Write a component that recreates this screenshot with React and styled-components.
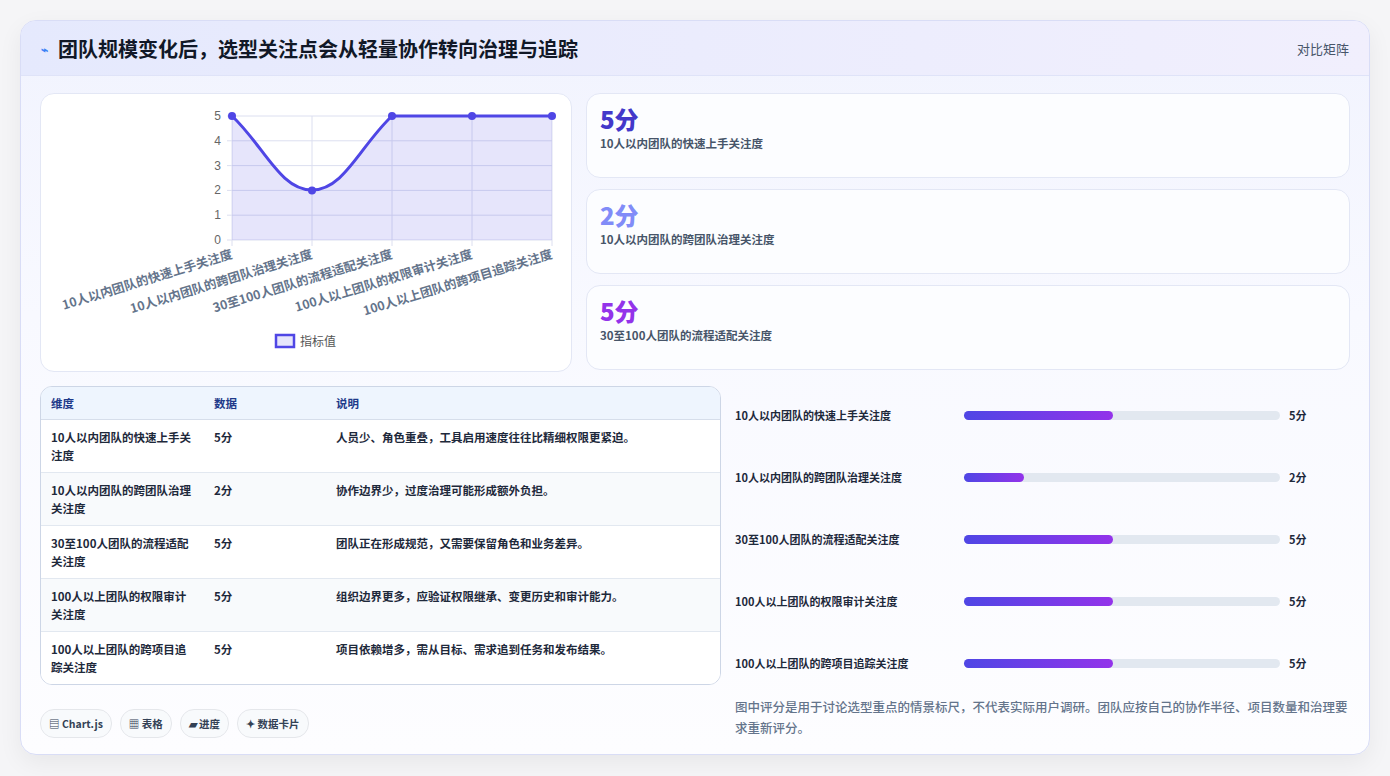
import React from "react";
import styled, { createGlobalStyle } from "styled-components";

const Global = createGlobalStyle`
  body { margin: 0; background: #f5f5f7; font-family: "Noto Sans CJK SC", "Noto Sans", sans-serif; color: #1e293b; }
`;
const Page = styled.div`padding: 20px 20px 21px 20px; width: 1390px; box-sizing: border-box;`;
const Card = styled.div`
  width: 1350px; height: 735px; box-sizing: border-box; border: 1px solid #d9ddf6; border-radius: 16px;
  background: linear-gradient(180deg, #f1f3fe 0%, #f8f9ff 40%, #fdfdff 100%); overflow: hidden;
  box-shadow: 0 8px 24px rgba(0,0,0,0.06); display: flex; flex-direction: column;
`;
const Header = styled.div`
  height: 55px; flex: none; display: flex; align-items: center; justify-content: space-between; padding: 0 20px 0 20px;
  background: linear-gradient(90deg, #e5e9fd, #f1effd); border-bottom: 1px solid #dfe3f8; box-sizing: border-box;
`;
const Title = styled.h1`margin: 0; font-size: 20px; font-weight: 700; color: #111827; display: flex; align-items: center; gap: 10px;`;
const Tag = styled.span`font-size: 13px; color: #475569;`;
const Body = styled.div`padding: 17px 19px 0 19px; display: flex; flex-direction: column; gap: 14px;`;
const Row = styled.div`display: grid; grid-template-columns: ${p => p.cols}; column-gap: 14px;`;
const Panel = styled.div`background: #fff; border: 1px solid #e3e7f5; border-radius: 14px;`;
const ChartPanel = styled(Panel)`height: 277px; position: relative;`;
const Stats = styled.div`display: flex; flex-direction: column; gap: 11px;`;
const Stat = styled(Panel)`height: 85px; box-sizing: border-box; padding: 9px 13px; background: #fcfdff;`;
const StatVal = styled.div`font-size: 24px; font-weight: 800; line-height: 32px; color: ${p => p.c};`;
const StatLbl = styled.div`font-size: 11.5px; font-weight: 700; color: #475569;`;
const Table = styled.table`
  width: 681px; border-collapse: separate; border-spacing: 0; border: 1px solid #cdd6e6; border-radius: 12px; overflow: hidden;
  font-size: 11.5px; background: #fff;
`;
const Th = styled.th`text-align: left; font-weight: 700; color: #1e3a8a; background: #eef5fe; height: 32px; padding: 0 10px; border-bottom: 1px solid #d6deeb; width: ${p => p.w || "auto"};`;
const Td = styled.td`padding: 8px 10px; vertical-align: top; line-height: 18px; height: 36px; color: #1e293b; font-weight: 600; background: ${p => p.alt ? "#f8fafc" : "#fff"}; border-top: ${p => p.first ? "none" : "1px solid #e2e8f0"};`;
const Right = styled.div`display: flex; flex-direction: column;`;
const Bars = styled.div`display: flex; flex-direction: column; padding-top: 21px; gap: 53px;`;
const BarRow = styled.div`display: grid; grid-template-columns: 220px 316px 1fr; align-items: center; column-gap: 9px; font-size: 11px; font-weight: 700; height: 9px;`;
const Track = styled.div`height: 9px; border-radius: 5px; background: #e2e8f0;`;
const Fill = styled.div`height: 100%; border-radius: 5px; background: linear-gradient(90deg, #4f46e5, #9333ea);`;
const Note = styled.p`margin: 32px 0 0; font-size: 12.5px; line-height: 21px; color: #64748b; font-weight: 500;`;
const Chips = styled.div`display: flex; gap: 8px; padding-top: 24px;`;
const Chip = styled.span`font-size: 10.5px; font-weight: 700; color: #334155; background: #f8fafc; border: 1px solid #e5e7eb; border-radius: 14px; padding: 6px 8px;`;

const labels = ["10人以内团队的快速上手关注度","10人以内团队的跨团队治理关注度","30至100人团队的流程适配关注度","100人以上团队的权限审计关注度","100人以上团队的跨项目追踪关注度"];
const vals = [5,2,5,5,5];
const notes = ["人员少、角色重叠，工具启用速度往往比精细权限更紧迫。","协作边界少，过度治理可能形成额外负担。","团队正在形成规范，又需要保留角色和业务差异。","组织边界更多，应验证权限继承、变更历史和审计能力。","项目依赖增多，需从目标、需求追到任务和发布结果。"];

function Chart() {
  const xs = [191, 271, 351, 431, 511];
  const y = v => 146 - v * 24.8;
  const area = "M191,22 C223,52 239,96 271,96 C303,96 319,52 351,22 L511,22";
  return (
    <svg width="531" height="277" style={{ position: "absolute", left: 0, top: 0 }}>
      {[0,1,2,3,4,5].map(v => <g key={v}><line x1="186" x2="511" y1={y(v)} y2={y(v)} stroke="#dcdff0" /><text x="180" y={y(v)+4} textAnchor="end" fontSize="12" fill="#666" fontFamily="Liberation Sans">{v}</text></g>)}
      {xs.map(x => <line key={x} x1={x} x2={x} y1="22" y2="152" stroke="#dcdff0" />)}
      <path d={area + " L511,146 L191,146 Z"} fill="rgba(79,70,229,0.14)" />
      <path d={area} fill="none" stroke="#4f46e5" strokeWidth="3" />
      {xs.map((x,i) => <circle key={x} cx={x} cy={y(vals[i])} r="4" fill="#4f46e5" />)}
      {labels.map((l,i) => <text key={i} transform={`translate(${xs[i]},160) rotate(-17)`} textAnchor="end" dy="4" fontSize="12.5" fontWeight="700" fill="#64748b" fontFamily="Noto Sans CJK SC">{l}</text>)}
      <rect x="235" y="241" width="18" height="12" fill="rgba(79,70,229,0.14)" stroke="#4f46e5" strokeWidth="2.5" />
      <text x="259" y="252" fontSize="12" fill="#555" fontFamily="Noto Sans CJK SC">指标值</text>
    </svg>
  );
}

export default function App() {
  return (
    <Page>
      <Global />
      <Card>
        <Header>
          <Title><span style={{ color: "#3b82f6", fontSize: 12 }}>⌁</span>团队规模变化后，选型关注点会从轻量协作转向治理与追踪</Title>
          <Tag>对比矩阵</Tag>
        </Header>
        <Body>
          <Row cols="532px 1fr">
            <ChartPanel><Chart /></ChartPanel>
            <Stats>
              <Stat><StatVal c="#4338ca">5分</StatVal><StatLbl>10人以内团队的快速上手关注度</StatLbl></Stat>
              <Stat><StatVal c="#818cf8">2分</StatVal><StatLbl>10人以内团队的跨团队治理关注度</StatLbl></Stat>
              <Stat><StatVal c="#9333ea">5分</StatVal><StatLbl>30至100人团队的流程适配关注度</StatLbl></Stat>
            </Stats>
          </Row>
          <Row cols="681px 1fr">
            <div>
              <Table>
                <thead><tr><Th w="143px">维度</Th><Th w="102px">数据</Th><Th>说明</Th></tr></thead>
                <tbody>
                  {labels.map((d,i) => (
                    <tr key={i}>
                      <Td first={i===0} alt={i%2===1}>{d}</Td>
                      <Td first={i===0} alt={i%2===1}>{vals[i]}分</Td>
                      <Td first={i===0} alt={i%2===1}>{notes[i]}</Td>
                    </tr>
                  ))}
                </tbody>
              </Table>
              <Chips>
                <Chip>▤ Chart.js</Chip><Chip>▦ 表格</Chip><Chip>▰ 进度</Chip><Chip>✦ 数据卡片</Chip>
              </Chips>
            </div>
            <Right>
              <Bars>
                {labels.map((d,i) => (
                  <BarRow key={i}><span>{d}</span><Track><Fill style={{ width: vals[i] === 5 ? "47%" : "19%" }} /></Track><span>{vals[i]}分</span></BarRow>
                ))}
              </Bars>
              <Note>图中评分是用于讨论选型重点的情景标尺，不代表实际用户调研。团队应按自己的协作半径、项目数量和治理要求重新评分。</Note>
            </Right>
          </Row>
        </Body>
      </Card>
    </Page>
  );
}
